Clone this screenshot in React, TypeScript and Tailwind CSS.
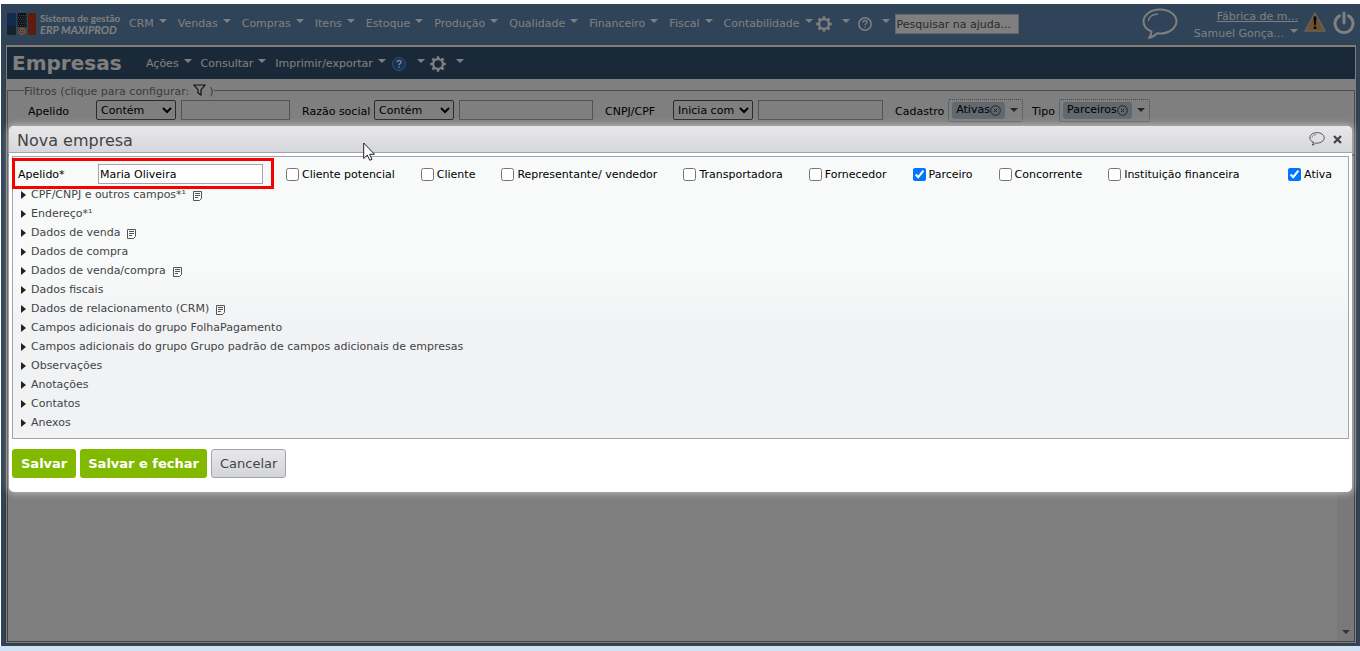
import React from 'react';

interface IconProps {
  className?: string;
}

const menus = [
  'CRM',
  'Vendas',
  'Compras',
  'Itens',
  'Estoque',
  'Produção',
  'Qualidade',
  'Financeiro',
  'Fiscal',
  'Contabilidade',
];

const companyTypes = [
  { label: 'Cliente potencial', checked: false },
  { label: 'Cliente', checked: false },
  { label: 'Representante/ vendedor', checked: false },
  { label: 'Transportadora', checked: false },
  { label: 'Fornecedor', checked: false },
  { label: 'Parceiro', checked: true },
  { label: 'Concorrente', checked: false },
  { label: 'Instituição financeira', checked: false },
];

const sections = [
  { label: 'CPF/CNPJ e outros campos*¹', note: true },
  { label: 'Endereço*¹', note: false },
  { label: 'Dados de venda', note: true },
  { label: 'Dados de compra', note: false },
  { label: 'Dados de venda/compra', note: true },
  { label: 'Dados fiscais', note: false },
  { label: 'Dados de relacionamento (CRM)', note: true },
  { label: 'Campos adicionais do grupo FolhaPagamento', note: false },
  {
    label:
      'Campos adicionais do grupo Grupo padrão de campos adicionais de empresas',
    note: false,
  },
  { label: 'Observações', note: false },
  { label: 'Anotações', note: false },
  { label: 'Contatos', note: false },
  { label: 'Anexos', note: false },
];

function Caret({ className = '' }: IconProps) {
  return (
    <svg
      viewBox="0 0 8 4"
      className={`h-1 w-2 shrink-0 ${className}`}
      fill="currentColor"
      aria-hidden="true"
    >
      <path d="M0 0h8L4 4z" />
    </svg>
  );
}

function Gear({ className = '' }: IconProps) {
  return (
    <svg viewBox="0 0 16 16" className={className} aria-hidden="true">
      <circle cx="8" cy="8" r="4.8" fill="none" stroke="currentColor" strokeWidth="2" />
      {[0, 45, 90, 135, 180, 225, 270, 315].map((angle) => (
        <path
          key={angle}
          d="M6 3.2 7 .2h2l1 3z"
          fill="currentColor"
          transform={`rotate(${angle} 8 8)`}
        />
      ))}
    </svg>
  );
}

function Bubble({ className = '' }: IconProps) {
  return (
    <svg
      viewBox="0 0 36 32"
      className={className}
      fill="none"
      stroke="currentColor"
      strokeWidth="2"
      strokeLinejoin="round"
      strokeLinecap="round"
      aria-hidden="true"
    >
      <path d="M9.5 23.5C4.500 21.500 1.500 17.500 1.500 13.300 1.500 6.800 8.800 1.500 18 1.500s16.500 5.300 16.500 11.800S27.200 25.500 18 25.500c-1 0-2 0-2.800-.2-2.200 2.200-4.800 4-8.200 4.700 1.500-2 2.500-4 2.500-6.500z" />
      <path d="M6.500 12.500c.6-3.600 4-6 9-6.500" strokeWidth="1.300" />
    </svg>
  );
}

function Note() {
  return (
    <svg
      viewBox="0 0 9 10"
      className="h-[10px] w-[9px]"
      fill="none"
      stroke="#555"
      aria-hidden="true"
    >
      <path d="M.5.5h8v7l-2 2h-6zM2 2.500h5M2 4.500h5M2 6.500h3" />
    </svg>
  );
}

function Logo() {
  return (
    <svg viewBox="0 0 29 22" className="h-[22px] w-[29px]" aria-hidden="true">
      <path d="M0 1q0-1 1-1h7q1 0 1 1v14H0z" fill="#24569c" />
      <path d="M0 13h9v8q0 1-1 1H1q-1 0-1-1z" fill="#2c445c" />
      <path d="M10.500 1q0-1 1-1h7q1 0 1 1v13h-9z" fill="#20242c" />
      <path
        d="M12 2.500h7M11 4.500h7M12 6.500h7M11 8.500h7M12 10.500h7M11 12.500h7"
        stroke="#7d8794"
        strokeDasharray="1 1"
      />
      <circle cx="15" cy="18.200" r="3.800" fill="#e0a070" />
      <path d="M12 17.500h6M13 19.500h4" stroke="#8a5040" strokeDasharray="1 1" />
      <path d="M21 1q0-1 1-1h6q1 0 1 1v20q0 1-1 1h-6q-1 0-1-1z" fill="#b83a1c" />
    </svg>
  );
}

function MenuButton({ label }: { label: string }) {
  return (
    <button type="button" className="flex items-center gap-[5px] whitespace-nowrap">
      {label}
      <Caret className="mb-[6px]" />
    </button>
  );
}

function FilterField({
  id,
  label,
  operator,
  labelClass,
  inputClass,
}: {
  id: string;
  label: string;
  operator: string;
  labelClass: string;
  inputClass: string;
}) {
  return (
    <div className="flex items-center">
      <label htmlFor={id} className={`pt-1 whitespace-nowrap ${labelClass}`}>
        {label}
      </label>
      <select
        aria-label={`Operador de ${label}`}
        className="h-5 w-20 rounded-[2px] border border-[#555] bg-white text-[11px]"
      >
        <option>{operator}</option>
      </select>
      <input
        id={id}
        type="text"
        className={`ml-[5px] h-5 border border-[#a0a5ad] bg-white ${inputClass}`}
      />
    </div>
  );
}

function TagPicker({ label, tag }: { label: string; tag: string }) {
  return (
    <div className="flex items-center gap-1">
      <span className="pt-1">{label}</span>
      <div className="flex h-[23px] items-center gap-[5px] rounded-[2px] border border-dotted border-[#8a929c] pr-1 pl-[3px]">
        <span className="flex h-[17px] items-center rounded-[3px] bg-[#c3d0dc] px-1">
          {tag}
          <button type="button" aria-label={`Remover ${tag}`}>
            <svg viewBox="0 0 11 11" className="size-[11px]" fill="none" stroke="#444">
              <circle cx="5.500" cy="5.500" r="4.800" />
              <path d="m4 4 3 3M7 4 4 7" />
            </svg>
          </button>
        </span>
        <button type="button" aria-label={`Abrir ${label}`}>
          <Caret className="text-[#34506c]" />
        </button>
      </div>
    </div>
  );
}

function TopBar() {
  return (
    <header className="flex h-10 items-center pr-[5px] pl-[6px] text-white">
      <Logo />
      <div className="ml-1 w-[84px] font-['Lato',sans-serif] font-bold whitespace-nowrap">
        <div className="text-[10px] leading-3">Sistema de gestão</div>
        <div className="text-[11px] leading-3 italic">ERP MAXIPROD</div>
      </div>
      <nav className="ml-[5px] flex items-center gap-[11px]">
        {menus.map((menu) => (
          <MenuButton key={menu} label={menu} />
        ))}
      </nav>
      <button type="button" aria-label="Configurações" className="ml-[3px] flex items-center gap-[10px]">
        <Gear className="size-4" />
        <Caret className="mb-[6px]" />
      </button>
      <button type="button" aria-label="Ajuda" className="ml-2 flex items-center gap-[10px]">
        <svg viewBox="0 0 14 14" className="size-[14px]" aria-hidden="true">
          <circle cx="7" cy="7" r="6.200" fill="none" stroke="currentColor" strokeWidth="1.500" />
          <path
            d="M5 5.500C5 4.300 5.800 3.500 7 3.500s2 .7 2 1.800C9 6.800 7 6.800 7 8.300M7 9.500v1.200"
            fill="none"
            stroke="currentColor"
            strokeWidth="1.300"
          />
        </svg>
        <Caret className="mb-[6px]" />
      </button>
      <input
        type="text"
        aria-label="Pesquisar na ajuda"
        placeholder="Pesquisar na ajuda..."
        className="ml-[5px] h-5 w-[124px] border border-[#ccc] bg-white px-px placeholder:text-[#555]"
      />
      <div className="ml-auto flex items-center">
        <button type="button" aria-label="Mensagens">
          <Bubble className="h-8 w-9" />
        </button>
        <div className="ml-4 flex flex-col items-end pt-px leading-[17px]">
          <a href="#" className="underline">
            Fábrica de m...
          </a>
          <button type="button" className="flex items-center gap-[6px]">
            Samuel Gonça...
            <Caret className="mb-1" />
          </button>
        </div>
        <svg viewBox="0 0 22 20" className="mb-1 ml-[6px] h-5 w-[22px]" aria-label="Aviso">
          <path d="M11 1 21 19H1z" fill="#e09a58" stroke="#d0c8c0" strokeWidth="1.500" strokeLinejoin="round" />
          <path d="M5 16h5M13 15h5M14 13h3" stroke="#e8d020" strokeDasharray="1 1" />
          <path d="M9.500 4.500h3l-.6 8.500h-1.800zM9.800 14.500h2.400v2.400H9.800z" fill="#111" />
        </svg>
        <button type="button" aria-label="Sair" className="mb-[3px] ml-[7px]">
          <svg viewBox="0 0 22 24" className="h-6 w-[22px]" fill="none" stroke="currentColor" strokeWidth="3">
            <path d="M6.500 4.800a9 9 0 1 0 9 0M11 2v10" strokeLinecap="round" />
          </svg>
        </button>
      </div>
    </header>
  );
}

function PageHeader() {
  return (
    <div className="flex h-8 items-center bg-[#345270] pl-[5px] text-white">
      <h1 className="w-[134px] text-[20px] font-bold">Empresas</h1>
      <nav className="flex items-center gap-[9px] pt-[2px]">
        <MenuButton label="Ações" />
        <MenuButton label="Consultar" />
        <MenuButton label="Imprimir/exportar" />
      </nav>
      <button type="button" aria-label="Ajuda" className="ml-[6px] flex items-center gap-[11px] pt-[2px]">
        <svg viewBox="0 0 14 14" className="size-[14px]" aria-hidden="true">
          <circle cx="7" cy="7" r="6.500" fill="#2a66b4" stroke="#6c9cd4" />
          <path
            d="M5 5.300C5 4.200 5.800 3.500 7 3.500s2 .7 2 1.700C9 6.700 7 6.700 7 8.200M7 9.500v1.300"
            fill="none"
            stroke="#fff"
            strokeWidth="1.500"
          />
        </svg>
        <Caret className="mb-[6px]" />
      </button>
      <button type="button" aria-label="Opções" className="ml-[5px] flex items-center gap-[10px] pt-[2px]">
        <Gear className="size-4" />
        <Caret className="mb-[6px]" />
      </button>
    </div>
  );
}

function Filters() {
  return (
    <fieldset className="mt-1 h-[72px] min-w-0 border border-[#999] pl-5">
      <legend className="-ml-1 flex h-[15px] items-end leading-[13px] text-[#777]">
        Filtros (clique para configurar:&nbsp;
        <button type="button" aria-label="Configurar filtros" className="mb-[2px]">
          <svg viewBox="0 0 13 12" className="h-3 w-[13px]" fill="none" stroke="#222" strokeWidth="1.200">
            <path d="M1 1h11L8 6v5L5 9V6z" />
          </svg>
        </button>
        &nbsp;)
      </legend>
      <div className="flex h-6 items-center">
        <div className="flex items-center gap-3">
          <FilterField id="apelido-filtro" label="Apelido" operator="Contém" labelClass="w-[68px]" inputClass="w-[109px]" />
          <FilterField id="razao" label="Razão social" operator="Contém" labelClass="w-[72px]" inputClass="w-[134px]" />
          <FilterField id="cnpj" label="CNPJ/CPF" operator="Inicia com" labelClass="w-[68px]" inputClass="w-[125px]" />
        </div>
        <div className="ml-3 flex items-center gap-[9px]">
          <TagPicker label="Cadastro" tag="Ativas" />
          <TagPicker label="Tipo" tag="Parceiros" />
        </div>
      </div>
    </fieldset>
  );
}

function CompanyDialog() {
  return (
    <section
      role="dialog"
      aria-labelledby="dialog-title"
      className="absolute inset-x-2 top-[122px] h-[366px] rounded-[5px] bg-white shadow-[0_0_7px_1px_rgba(255,255,255,0.5)]"
    >
      <div className="flex h-[27px] items-center justify-between rounded-t-[5px] border-b border-[#a0a5ad] bg-linear-to-b from-[#e8e8ea] to-[#d6d7da] pr-[10px] pl-2 text-[#444]">
        <h2 id="dialog-title" className="pt-1 text-[16px]">
          Nova empresa
        </h2>
        <div className="flex items-center gap-2">
          <button type="button" aria-label="Comentários">
            <Bubble className="h-[14px] w-4" />
          </button>
          <button type="button" aria-label="Fechar">
            <svg viewBox="0 0 9 9" className="size-[9px]" stroke="currentColor" strokeWidth="2.200">
              <path d="m1 1 7 7M8 1 1 8" />
            </svg>
          </button>
        </div>
      </div>
      <form className="px-[3px] pt-[3px]">
        <div className="h-[283px] border border-[#a0a5ad] bg-linear-to-b from-[#f8faf9] from-40% to-[#f0f2f4] to-60%">
          <div className="relative flex h-[29px] items-center pt-[5px] pr-4 pl-[5px]">
            <label htmlFor="apelido" className="w-20 pt-[3px]">
              Apelido*
            </label>
            <input
              id="apelido"
              type="text"
              defaultValue="Maria Oliveira"
              className="h-5 w-[165px] border border-[#a0a5ad] bg-white px-px"
            />
            <div className="absolute top-[1px] -left-[1px] h-[31px] w-[262px] border-3 border-[#f90000]" />
            <div className="ml-[23px] flex flex-1 items-center gap-[26px]">
              {companyTypes.map((type) => (
                <label key={type.label} className="flex items-center gap-[3px] whitespace-nowrap">
                  <input type="checkbox" defaultChecked={type.checked} className="size-[13px]" />
                  <span className="pt-[3px]">{type.label}</span>
                </label>
              ))}
              <label className="ml-auto flex items-center gap-[3px]">
                <input type="checkbox" defaultChecked className="size-[13px]" />
                <span className="pt-[3px]">Ativa</span>
              </label>
            </div>
          </div>
          <ul className="text-[#444]">
            {sections.map((section) => (
              <li key={section.label} className="flex h-[19px] items-center">
                <button type="button" className="flex items-center gap-[5px] pl-2">
                  <svg viewBox="0 0 5 8" className="mb-[2px] h-2 w-[5px]" fill="#222" aria-hidden="true">
                    <path d="M0 0v8l5-4z" />
                  </svg>
                  {section.label}
                  {section.note && (
                    <span className="pt-px pl-[2px]">
                      <Note />
                    </span>
                  )}
                </button>
              </li>
            ))}
          </ul>
        </div>
        <div className="flex gap-1 pt-[10px] text-[13px]">
          <button type="submit" className="h-[29px] rounded-[3px] bg-[#80b900] px-[9px] font-bold text-white">
            Salvar
          </button>
          <button type="button" className="h-[29px] rounded-[3px] bg-[#80b900] px-2 font-bold text-white">
            Salvar e fechar
          </button>
          <button
            type="button"
            className="h-[29px] rounded-[3px] border border-[#a0a5ad] bg-linear-to-b from-[#e8e8ea] to-[#d4d5d8] px-2 text-[#444]"
          >
            Cancelar
          </button>
        </div>
      </form>
    </section>
  );
}

export default function App() {
  return (
    <div className="flex min-h-screen flex-col bg-[#d3e2f2] font-['Verdana','DejaVu_Sans',sans-serif] text-[11px] text-black">
      <div className="h-1 bg-white" />
      <main className="relative flex flex-1 flex-col border-l border-white bg-[#5e86b2]">
        <TopBar />
        <div className="mr-[3px] mb-[2px] ml-1 flex flex-1 flex-col border border-[#777] bg-white p-px pt-[2px]">
          <PageHeader />
          <Filters />
          <div className="flex flex-1 justify-end border border-[#888]">
            <div className="flex w-[17px] items-end justify-center bg-[#f0f2f0] pb-[7px]">
              <Caret className="text-[#666]" />
            </div>
          </div>
        </div>
        <div className="absolute inset-0 bg-black/50" />
        <CompanyDialog />
        <svg viewBox="0 0 12 19" className="absolute top-[138px] left-[362px] h-[19px] w-3" aria-hidden="true">
          <path
            d="M.7 1v15.500l3.600-3.400 2.500 5.200 2.200-1-2.400-5h4.900z"
            fill="#fff"
            stroke="#222"
          />
        </svg>
      </main>
      <div className="h-[5px]" />
    </div>
  );
}
